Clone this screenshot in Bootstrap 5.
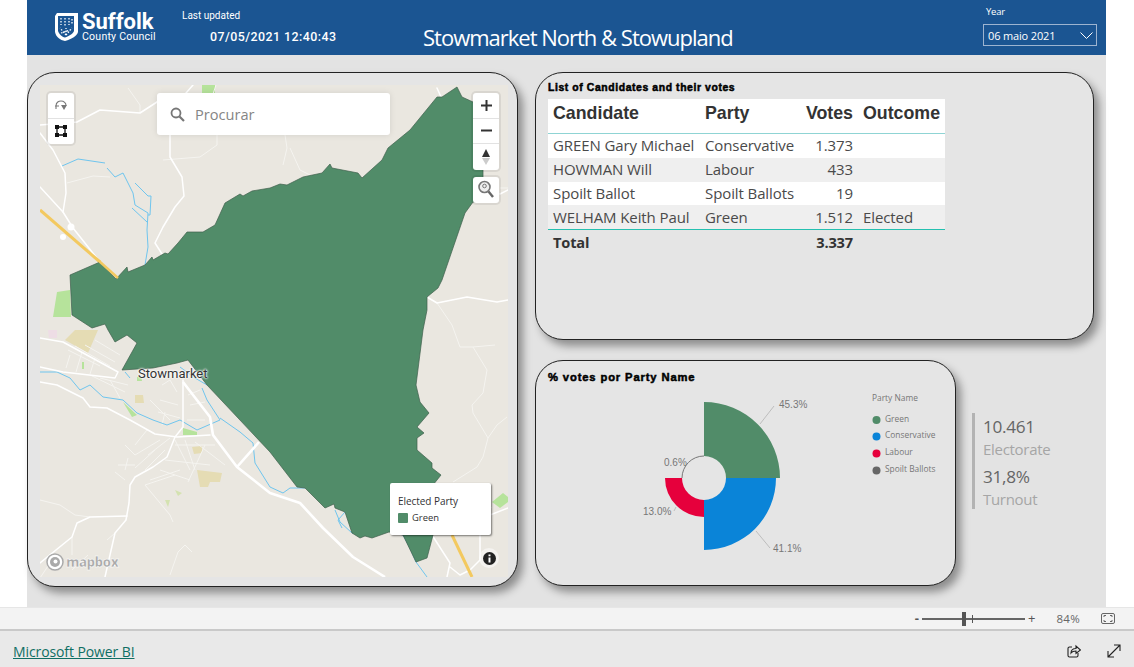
<!DOCTYPE html>
<html lang="en">
<head>
  <meta charset="UTF-8" />
  <meta name="viewport" content="width=device-width, initial-scale=1.0"/>
  <title>Stowmarket North &amp; Stowupland</title>
  <link href="https://cdn.jsdelivr.net/npm/bootstrap@5.3.6/dist/css/bootstrap.min.css" rel="stylesheet">
  <script src="https://cdn.jsdelivr.net/npm/bootstrap@5.3.6/dist/js/bootstrap.bundle.min.js"></script>
  <style>
    html, body { height: 667px; overflow: hidden; }
    body { background: #fff; font-family: "Open Sans", "Liberation Sans", sans-serif; }

    .report-area { margin: 0 28px 0 27px; height: 607px; background: #e3e3e3; }
    .report-head { height: 55px; background: #1b5592; color: #fff; padding-left: 27px; }
    .logo-wrap { width: 128px; padding-top: 12px; }
    .logo-name { font: 700 22px/19px Roboto, sans-serif; }
    .logo-sub { font: 400 10.6px/12px Roboto, sans-serif; letter-spacing: .2px; }
    .update-wrap { width: 241px; padding-top: 9px; }
    .update-label { font: 400 10px/13px Roboto, sans-serif; }
    .update-time { font: 500 12.4px/16px Roboto, sans-serif; margin: 7px 0 0 28px; letter-spacing: .45px; }
    .page-title { font: 400 22px/30px "Open Sans", sans-serif; letter-spacing: -1px; margin-top: 22px; white-space: nowrap; }
    .year-wrap { width: 114px; margin: 5px 9px 0 auto; }
    .year-label { font: 400 9.5px/13px "Open Sans", sans-serif; padding-left: 3px; letter-spacing: -.2px; }
    .year-box { height: 22px; margin-top: 6px; border: 1.5px solid #9db4d0; font: 400 11px/19px "Open Sans", sans-serif; padding: 0 3px 0 4px; letter-spacing: -.15px; }

    .report-body { padding-top: 17px; }
    .round-panel { background: #e5e5e5; border: 1px solid #222; border-radius: 28px; box-shadow: 5px 6px 8px rgba(0,0,0,.38); }
    .map-panel { width: 491px; height: 515px; padding: 12px 9px 9px 12px; }
    .map-canvas { height: 492px; background: #eae7e0; overflow: hidden; }
    .map-canvas > svg { display: block; }
    .right-col { width: 559px; margin-left: 17px; }
    .votes-panel { height: 268px; padding: 9px 12px; }
    .panel-title { font: 700 10.4px/12px "Liberation Sans", sans-serif; color: #000; -webkit-text-stroke: .5px #000; letter-spacing: .6px; white-space: nowrap; }
    .votes-panel .panel-title { margin-bottom: 5px; }
    .donut-panel { width: 421px; height: 226px; }
    .donut-row { margin-top: 20px; }
    .donut-panel .panel-title { position: absolute; left: 12px; top: 10px; font-size: 11.2px; letter-spacing: .88px; }

    .votes-table { width: 397px; table-layout: fixed; margin: 0; border-collapse: separate; border-spacing: 0; }
    .votes-table th, .votes-table td { padding: 0 5px; border: 0; white-space: nowrap; }
    .votes-table thead th { height: 35px; vertical-align: top; background: #fff; color: #333; font: 700 17.8px/28px "Liberation Sans", sans-serif; border-bottom: 1px solid #8fd4d4; }
    .votes-table tbody td { height: 23.8px; font: 400 15px/23px "Open Sans", sans-serif; letter-spacing: -.1px; color: #4a4a4a; }
    .votes-table tbody tr:nth-child(odd) td { background: #fff; }
    .votes-table tbody tr:nth-child(even) td { background: #efefef; }
    .votes-table tfoot td { font: 700 14.6px/24px "Open Sans", sans-serif; border-top: 1px solid #25c0b0; color: #333; letter-spacing: -.15px; }
    .col-name { width: 152px; }
    .col-party { width: 99px; }
    .col-votes { width: 59px; }
    .col-outcome { width: 87px; }

    .kpi-block { margin: 53px 0 0 16px; width: 90px; height: 96px; border-left: 3px solid #b3b3b3; padding: 3px 0 0 8px; }
    .kpi-num { font: 400 17.2px/22px "Open Sans", sans-serif; color: #666; letter-spacing: -.3px; }
    .kpi-name { font: 400 15px/22px "Open Sans", sans-serif; color: #a6a6a6; letter-spacing: -.3px; margin-bottom: 6px; }

    .map-btns { background: #fff; border-radius: 3px; box-shadow: 0 0 0 2px rgba(0,0,0,.07); width: 26px; }
    .map-btn { height: 25.5px; display: flex; align-items: center; justify-content: center; border-bottom: 1px solid #e2e2e2; }
    .map-btn:last-child { border-bottom: 0; }
    .btns-left { left: 8px; top: 8px; }
    .btns-right { right: 9px; top: 8px; }
    .btns-locate { right: 9px; top: 92px; }
    .search-box { left: 117px; top: 8px; width: 233px; height: 42px; background: #fff; border-radius: 3px; box-shadow: 0 0 6px rgba(0,0,0,.1); color: #858585; font-size: 14.6px; padding: 1px 0 0 13px; gap: 10px; }
    .map-legend { left: 350px; top: 398px; width: 101px; height: 52px; background: #fff; border-radius: 2px; box-shadow: 1px 1px 2px rgba(0,0,0,.5); padding: 9px 8px; font-size: 9.4px; color: #333; }
    .legend-swatch { width: 10px; height: 10px; background: #518c69; border-radius: 1px; }
    .legend-head { font-size: 10px; line-height: 19px; font-weight: 500; letter-spacing: -.05px; }
    .town-label { left: 98px; top: 281px; font: 400 13px/16px Roboto, sans-serif; color: #333; text-shadow: 0 0 2px #fff, 0 0 2px #fff, 0 0 3px #fff; }
    .mapbox-mark { left: 6px; top: 467px; gap: 2px; font: 800 13.5px/20px "Open Sans", sans-serif; color: #aaa; -webkit-text-stroke: .5px #fff; letter-spacing: -.7px; }
    .map-info { right: 11px; bottom: 11px; width: 16px; height: 16px; background: rgba(255,255,255,.5); border-radius: 50%; box-shadow: 0 0 0 2px rgba(255,255,255,.5); }

    .chart-label { font: 400 10px "Liberation Sans", sans-serif; fill: #777; }
    .chart-legend { font: 400 8.4px "Open Sans", sans-serif; fill: #777; }

    .zoom-bar { height: 24px; background: #f3f3f3; border-top: 1px solid #e6e6e6; border-bottom: 2px solid #c9c9c9; color: #555; font-size: 11.5px; padding-right: 19px; }
    .zoom-minus { font-weight: 700; font-size: 13px; }
    .zoom-plus { font-size: 13px; }
    .zoom-track { width: 103px; height: 2px; background: #666; margin: 0 3px; }
    .zoom-thumb { left: 40px; top: -6px; width: 4px; height: 14px; background: #555; }
    .zoom-tick { left: 50px; top: -3px; width: 1px; height: 8px; background: #555; }
    .zoom-pct { margin: 0 21px; letter-spacing: .3px; color: #666; }
    .power-foot { height: 36px; background: #e9e9e9; padding: 4px 13px 0; }
    .power-link { color: #0f6f64; font-size: 14px; letter-spacing: -.1px; }
    .foot-icons { gap: 26px; }
  </style>
</head>
<body>
  <div class="report-area">
    <header class="report-head d-flex">
      <div class="logo-wrap d-flex gap-1">
        <svg width="24" height="30" viewBox="0 0 24 30" aria-hidden="true">
          <path d="M3 1H24V20C23 24 18 27 11 29C6 28 2 25 1 20V4Z" fill="#fff"/>
          <path d="M4 4H20V19C19 22 15 24 11 25.5C8 25 5 22 4 19Z" fill="#1b5592"/>
          <g stroke="#fff" stroke-width="1.3" stroke-dasharray="1.5 1.5">
            <path d="M7 6V13M11 6V15M15 6V13M18 7V12"/>
            <path d="M12 23L6 16M12 23L18 16M12 23V16M7 21L16 18"/>
          </g>
        </svg>
        <div>
          <div class="logo-name">Suffolk</div>
          <div class="logo-sub">County Council</div>
        </div>
      </div>
      <div class="update-wrap">
        <div class="update-label">Last updated</div>
        <div class="update-time">07/05/2021 12:40:43</div>
      </div>
      <div class="page-title">Stowmarket North &amp; Stowupland</div>
      <div class="year-wrap">
        <div class="year-label">Year</div>
        <div class="year-box d-flex justify-content-between align-items-center">
          <span>06 maio 2021</span>
          <svg width="13" height="7" viewBox="0 0 13 7" aria-hidden="true"><path d="M.5.5L6.5 6.5L12.5.5" fill="none" stroke="#fff"/></svg>
        </div>
      </div>
    </header>

    <main class="report-body d-flex">
      <section class="round-panel map-panel">
        <div class="map-canvas position-relative">
          <svg width="468" height="492" viewBox="40 85 468 492" aria-hidden="true">
            <!-- land use patches -->
            <g fill="#b6e39b">
              <path d="M202 85H215V93H202Z"/>
              <path d="M57 292L70 290L71 317H53Z"/>
              <path d="M492 502L503 493L508 497V502L500 508Z"/>
              <path d="M183 428L197 432V435H183Z"/>
              <path d="M123 402L137 415L132 417Z"/>
              <path d="M82 362H84V369H82Z"/>
              <path d="M137 377L141 376L142 381H137Z"/>
              <path d="M175 490L182 493L178 496Z" fill="#d4e2b0"/>
              <path d="M165 500L170 500L168 507Z" fill="#d4e2b0"/>
            </g>
            <g fill="#e5dcb4">
              <path d="M65 340L75 330H98L88 353Z"/>
              <path d="M135 395H143L144 403H135Z"/>
              <path d="M192 447L202 446V453L194 454Z"/>
              <path d="M197 470L222 473L220 482L210 482L208 487H200Z"/>
            </g>
            <path d="M48 330H57V338H49Z" fill="#eedde5"/>

            <!-- minor roads -->
            <g fill="none" stroke="#f5f4f0" stroke-width="1" stroke-linejoin="round">
              <path d="M67 183L93 176L110 177"/>
              <path d="M163 160L200 157L217 145V135"/>
              <path d="M128 88L140 105V113"/>
              <path d="M216 85L211 100"/>
              <path d="M285 135L287 148L283 165"/>
              <path d="M290 148L300 170L310 175"/>
              <path d="M500 188H508"/>
              <path d="M437 303L452 325L460 347H473L487 370L483 393L472 405L473 413L488 438L483 457L477 467L453 482"/>
              <path d="M473 347L495 345M488 438L497 425L507 417"/>
              <path d="M492 507L470 530"/>
              <path d="M40 500L60 505L75 515L90 517"/>
              <path d="M72 537V555M115 533L107 540"/>
              <path d="M185 545L178 552L170 575M185 545L192 552"/>
              <path d="M40 578L50 563"/>
              <path d="M88 555L72 570"/>
              <!-- town streets -->
              <path d="M68 350L100 366M75 346L110 366M85 345L115 362M95 340L120 355"/>
              <path d="M70 355L66 368M82 352L76 372M95 358L90 374"/>
              <path d="M90 375L125 392M100 378L128 385M110 380L120 398"/>
              <path d="M162 385L170 380L177 392M160 400L178 405M158 412L180 418M165 412L162 425M150 400L170 420"/>
              <path d="M187 420H205M190 405L205 402M188 395L200 390"/>
              <path d="M135 445L147 430M125 445L135 455L160 440M148 455L170 438M135 468L155 450M118 465L135 465M115 472L125 480M145 470L165 450M125 470L128 458"/>
              <path d="M175 440L190 470M185 440L195 470M165 460L210 465M160 470L190 480M175 445H215M195 442L225 465M150 480L180 470M145 485L175 475M205 445L188 482"/>
              <path d="M145 485L170 515L173 522"/>
            </g>

            <!-- rivers -->
            <g fill="none" stroke="#6fc5ee" stroke-width="1" stroke-linejoin="round">
              <path d="M62 166L78 159L105 163M107 168L115 177L123 173L133 193L135 205L148 213L147 230L148 247L145 265"/>
              <path d="M135 183L148 196H151L150 215H148M132 208L147 222"/>
              <path d="M40 372H57L70 378L80 390L90 385L103 397L123 400L137 413L153 420L167 425L180 420L197 430L220 420L207 400L202 388"/>
              <path d="M220 418L240 432L253 443L255 463L270 487L283 493L290 488H305"/>
              <path d="M335 510L340 522L352 533L362 534L372 530L389 528M403 535L410 548L416 562L427 577M345 512L338 520L342 528"/>
              <path d="M180 367L195 378L207 385"/>
              <path d="M125 372L130 378"/>
            </g>

            <!-- main roads -->
            <g fill="none" stroke="#fff" stroke-width="1.5" stroke-linejoin="round" stroke-linecap="round">
              <path d="M40 125L77 122L100 110L140 113L157 102"/>
              <path d="M157 102L180 100L193 85"/>
              <path d="M40 133L53 150L65 173L66 193L63 212"/>
              <path d="M40 187L63 212L73 228L100 262L118 278"/>
              <path d="M170 135V157L182 177L184 196L175 207L163 227L155 243L162 254"/>
              <path d="M40 338L63 342L118 372L115 378L63 372L40 367"/>
              <path d="M40 382L57 385L83 398L90 407L107 408L130 420L155 434L177 437L210 435"/>
              <path d="M183 380V427L175 437L167 457L153 467L135 477L130 485L129 503L126 520L115 533L105 577"/>
              <path d="M127 516L90 517L77 523L72 537L40 563"/>
              <path d="M427 297L437 303L467 297L497 302L508 300"/>
              <path d="M500 194L508 190"/>
              <path d="M437 88L441 97"/>
              <path d="M432 535L450 563L447 577M480 535V560L470 570L460 575L450 567"/>
              <path d="M490 515L508 508"/>
            </g>
            <g fill="none" stroke="#fff" stroke-width="2.6" stroke-linejoin="round">
              <path d="M183 382L210 417L213 435L237 467L270 493L300 503L323 528L353 557L385 577"/>
              <path d="M237 467L259 442"/>
            </g>
            <g fill="none" stroke="#f3c95f">
              <path d="M40 210L100 262" stroke-width="3"/>
              <path d="M452 535L472 577" stroke-width="3"/>
            </g>
            <circle cx="63" cy="237" r="3" fill="#fff"/>
            <circle cx="71" cy="227" r="3.5" fill="#fff"/>

            <!-- ward boundary -->
            <path fill="#518c69" stroke="#3f5f4c" stroke-width=".7" stroke-linejoin="round"
              d="M70 275L100 262L116 279L127 267L128 272L145 265L152 257L153 260L165 253L168 254L178 243L187 232H203L215 225L225 203L240 194L243 196L252 191L270 188L280 184L287 185L303 177L322 173L330 164L332 168L358 173L362 178L382 160L388 148L410 130L437 97H442L457 87L462 97L473 102H483V202H473L465 213L442 280L438 288L427 297V310L423 330L416 385L420 402L429 413L417 427L424 433L417 438V450L432 463V468L441 475L433 485V535L427 558L416 562L403 535L389 532L372 538L365 536L360 538L352 533L345 512L335 508L334 504L325 508L305 488L297 487L270 452L207 385L188 360L177 363L153 368L122 370L137 343L127 335L115 342L108 330L105 324L92 328L72 315Z"/>
            <path d="M99 261L118 278" fill="none" stroke="#f3c95f" stroke-width="2.400"/>
          </svg>

          <div class="position-absolute town-label">Stowmarket</div>

          <div class="position-absolute map-btns btns-left">
            <div class="map-btn">
              <svg width="14" height="13" viewBox="0 0 14 13" aria-hidden="true"><path d="M2 10V7C2 3 5 2 7 2C10 2 12 4 12 6.500M1 7H5" fill="none" stroke="#777" stroke-width="1.100"/><path d="M7 6H13L10 11Z" fill="#777"/></svg>
            </div>
            <div class="map-btn">
              <svg width="12" height="12" viewBox="0 0 12 12" aria-hidden="true"><path d="M2 2H10V10H2Z" fill="none" stroke="#111" stroke-width="1.300"/><path d="M0 0H4V4H0ZM8 0H12V4H8ZM0 8H4V12H0ZM8 8H12V12H8Z" fill="#111"/></svg>
            </div>
          </div>

          <div class="position-absolute search-box d-flex align-items-center">
            <svg width="15" height="15" viewBox="0 0 15 15" aria-hidden="true"><circle cx="6" cy="6" r="4.500" fill="none" stroke="#777" stroke-width="1.800"/><path d="M9.500 9.500L14 14" stroke="#777" stroke-width="2.200"/></svg>
            <span>Procurar</span>
          </div>

          <div class="position-absolute map-btns btns-right">
            <div class="map-btn"><svg width="11" height="11" viewBox="0 0 11 11" aria-hidden="true"><path d="M5.500 0V11M0 5.500H11" stroke="#333" stroke-width="2"/></svg></div>
            <div class="map-btn"><svg width="11" height="3" viewBox="0 0 11 3" aria-hidden="true"><path d="M0 1.500H11" stroke="#333" stroke-width="2"/></svg></div>
            <div class="map-btn"><svg width="8" height="16" viewBox="0 0 8 16" aria-hidden="true"><path d="M4 0L8 8H0Z" fill="#333"/><path d="M4 16L8 9H0Z" fill="#ccc"/></svg></div>
          </div>
          <div class="position-absolute map-btns btns-locate">
            <div class="map-btn">
              <svg width="18" height="19" viewBox="0 0 18 19" aria-hidden="true"><circle cx="7.500" cy="7" r="5.500" fill="#eee" stroke="#777" stroke-width="1.600"/><circle cx="7.500" cy="6" r="1.800" fill="none" stroke="#777"/><path d="M11.500 11.500L16 17" stroke="#666" stroke-width="2.400"/></svg>
            </div>
          </div>

          <div class="position-absolute map-legend">
            <div class="legend-head">Elected Party</div>
            <div class="d-flex align-items-center gap-1"><span class="legend-swatch"></span><span>Green</span></div>
          </div>

          <div class="position-absolute mapbox-mark d-flex align-items-center">
            <svg width="18" height="18" viewBox="0 0 18 18" aria-hidden="true"><circle cx="9" cy="9" r="8" fill="#fff" stroke="#aaa" stroke-width="1.500"/><circle cx="9" cy="9" r="5" fill="#aaa"/><circle cx="9.500" cy="8.500" r="2" fill="#fff"/></svg>
            <span>mapbox</span>
          </div>

          <div class="position-absolute map-info d-flex align-items-center justify-content-center">
            <svg width="13" height="13" viewBox="0 0 13 13" aria-hidden="true"><circle cx="6.500" cy="6.500" r="6.500" fill="#222"/><path d="M5.500 5.500H7.500V10.500H5.500ZM5.500 2.500H7.500V4.300H5.500Z" fill="#fff"/></svg>
          </div>
        </div>
      </section>

      <div class="right-col">
        <section class="round-panel votes-panel">
          <div class="panel-title">List of Candidates and their votes</div>
          <table class="votes-table">
            <colgroup><col class="col-name"><col class="col-party"><col class="col-votes"><col class="col-outcome"></colgroup>
            <thead>
              <tr><th>Candidate</th><th>Party</th><th class="text-end">Votes</th><th>Outcome</th></tr>
            </thead>
            <tbody>
              <tr><td>GREEN Gary Michael</td><td>Conservative</td><td class="text-end">1.373</td><td></td></tr>
              <tr><td>HOWMAN Will</td><td>Labour</td><td class="text-end">433</td><td></td></tr>
              <tr><td>Spoilt Ballot</td><td>Spoilt Ballots</td><td class="text-end">19</td><td></td></tr>
              <tr><td>WELHAM Keith Paul</td><td>Green</td><td class="text-end">1.512</td><td>Elected</td></tr>
            </tbody>
            <tfoot>
              <tr><td>Total</td><td></td><td class="text-end">3.337</td><td></td></tr>
            </tfoot>
          </table>
        </section>

        <div class="donut-row d-flex">
          <section class="round-panel donut-panel position-relative">
            <div class="panel-title">% votes por Party Name</div>
            <svg width="421" height="226" viewBox="535 360 421 226" aria-hidden="true">
              <path d="M703 401A76 76 0 0 1 779 477H725A22 22 0 0 0 703 455Z" fill="#518c69"/>
              <path d="M775 477A72 72 0 0 1 703 549V499A22 22 0 0 0 725 477Z" fill="#0a84d8"/>
              <path d="M703 516A39 39 0 0 1 664 477H681A22 22 0 0 0 703 499Z" fill="#e6003c"/>
              <path d="M681 477A22 22 0 0 1 703 455" fill="none" stroke="#777" stroke-width="1"/>
              <g stroke="#bdbdbd" fill="none">
                <path d="M759 423L773 405"/>
                <path d="M755 530L769 547"/>
                <path d="M675 506L673 510"/>
              </g>
              <text class="chart-label" x="778" y="407">45.3%</text>
              <text class="chart-label" x="772" y="551">41.1%</text>
              <text class="chart-label" x="642" y="514">13.0%</text>
              <text class="chart-label" x="663" y="465">0.6%</text>
              <text class="chart-legend" x="871" y="400">Party Name</text>
              <circle cx="875.500" cy="419" r="4" fill="#518c69"/>
              <circle cx="875.500" cy="435.500" r="4" fill="#0a84d8"/>
              <circle cx="875.500" cy="452.500" r="4" fill="#e6003c"/>
              <circle cx="875.500" cy="469.500" r="4" fill="#666"/>
              <text class="chart-legend" x="884" y="421">Green</text>
              <text class="chart-legend" x="884" y="437">Conservative</text>
              <text class="chart-legend" x="884" y="454">Labour</text>
              <text class="chart-legend" x="884" y="471">Spoilt Ballots</text>
            </svg>
          </section>
          <div class="kpi-block">
            <div class="kpi-num">10.461</div>
            <div class="kpi-name">Electorate</div>
            <div class="kpi-num">31,8%</div>
            <div class="kpi-name">Turnout</div>
          </div>
        </div>
      </div>
    </main>
  </div>

  <div class="zoom-bar d-flex align-items-center justify-content-end">
    <span class="zoom-minus">-</span>
    <div class="zoom-track position-relative">
      <div class="zoom-thumb position-absolute"></div>
      <div class="zoom-tick position-absolute"></div>
    </div>
    <span class="zoom-plus">+</span>
    <span class="zoom-pct">84%</span>
    <svg width="14" height="11" viewBox="0 0 14 11" aria-hidden="true"><rect x=".5" y=".5" width="13" height="10" rx="1.500" fill="none" stroke="#666"/><path d="M3 4V2.500H5M9 2.500H11V4M3 7V8.500H5M9 8.500H11V7" fill="none" stroke="#666"/></svg>
  </div>
  <footer class="power-foot d-flex align-items-center justify-content-between">
    <a class="power-link" href="#">Microsoft Power BI</a>
    <div class="foot-icons d-flex align-items-center">
      <svg width="14" height="14" viewBox="0 0 14 14" aria-hidden="true"><path d="M5 3H2.500A1.500 1.500 0 0 0 1 4.500V11.500A1.500 1.500 0 0 0 2.500 13H9.500A1.500 1.500 0 0 0 11 11.500V9" fill="none" stroke="#222" stroke-width="1.100"/><path d="M4 9C4 6 6 4.500 9 4.500V2L13.500 6L9 9.500V7C7 7 5 7.500 4 9Z" fill="none" stroke="#222" stroke-width="1.100"/></svg>
      <svg width="14" height="14" viewBox="0 0 14 14" aria-hidden="true"><path d="M1 13L13 1M7 1H13V7M1 7V13H7" fill="none" stroke="#222" stroke-width="1.100"/></svg>
    </div>
  </footer>
</body>
</html>
